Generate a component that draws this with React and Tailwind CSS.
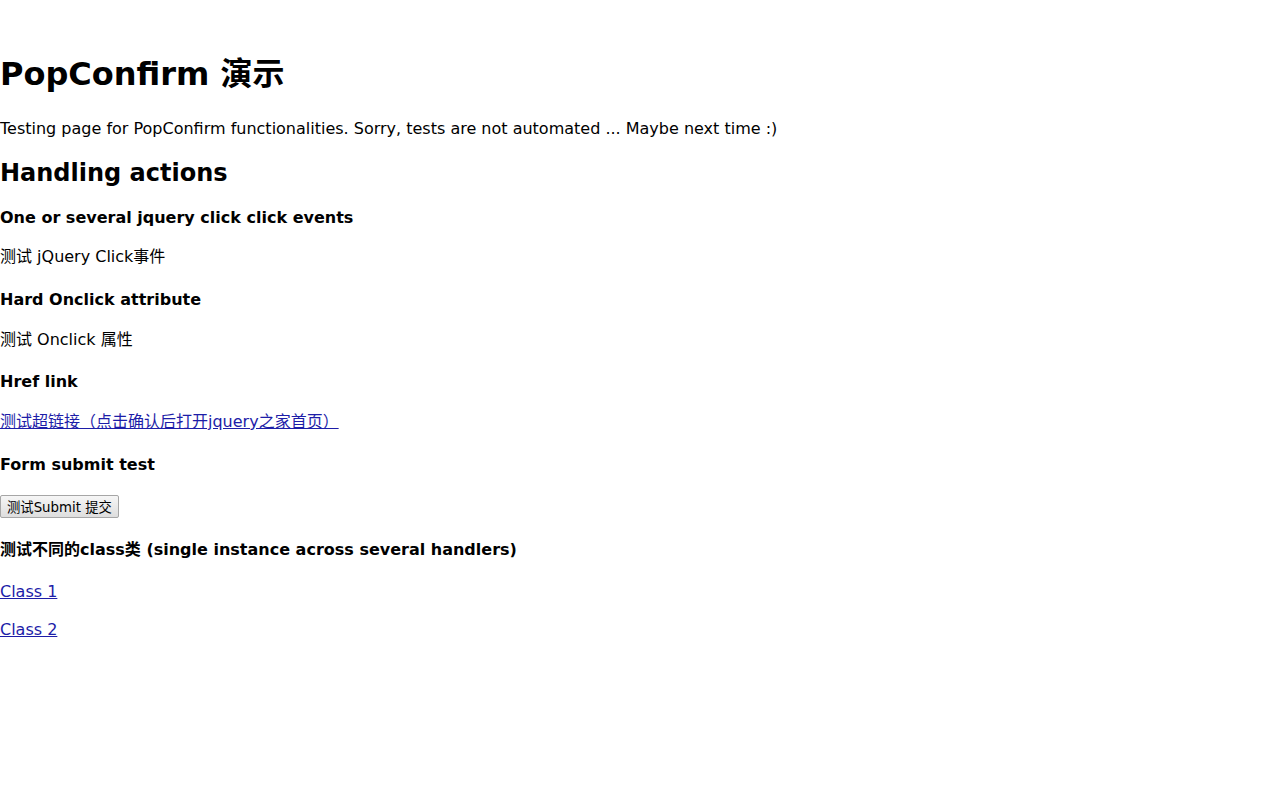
import React from "react";

const font = "font-['DejaVu_Sans','Noto_Sans_CJK_SC',sans-serif]";
const h4 = "text-base font-bold leading-[20px] h-[20px]";
const p = "text-base leading-[20px] h-[20px]";
const link = "text-[#1d1da8] underline";

const Index = () => {
  return (
    <div className={`${font} text-black bg-white min-h-screen pt-[55px] flex flex-col items-start`}>
      <h1 className="text-[32px] font-bold leading-[38px] h-[38px]">PopConfirm 演示</h1>
      <p className={`${p} mt-[25.5px]`}>
        Testing page for PopConfirm functionalities. Sorry, tests are not automated ... Maybe next time :)
      </p>

      <h2 className="text-2xl font-bold leading-[28px] h-[28px] mt-[20.5px]">Handling actions</h2>

      <h4 className={`${h4} mt-[20.8px]`}>One or several jquery click click events</h4>
      <p className={`${p} mt-[19.4px]`}>测试 jQuery Click事件</p>

      <h4 className={`${h4} mt-[22.8px]`}>Hard Onclick attribute</h4>
      <p className={`${p} mt-[20.4px]`}>测试 Onclick 属性</p>

      <h4 className={`${h4} mt-[22.1px]`}>Href link</h4>
      <p className={`${p} mt-[19.5px]`}>
        <a href="#" className={link}>测试超链接（点击确认后打开jquery之家首页）</a>
      </p>

      <h4 className={`${h4} mt-[22.6px]`}>Form submit test</h4>
      <form className="mt-[20.5px] flex" onSubmit={(e) => e.preventDefault()}>
        <button
          type="submit"
          className="h-[23px] text-[13.33px] leading-[normal] px-[6px] border border-[#a6a6a6] rounded-[2px] bg-gradient-to-b from-[#f6f6f6] to-[#dedede] text-black"
        >
          测试Submit 提交
        </button>
      </form>

      <h4 className={`${h4} mt-[21.5px]`}>测试不同的class类 (single instance across several handlers)</h4>
      <p className={`${p} mt-[22.1px]`}>
        <a href="#" className={link}>Class 1</a>
      </p>
      <p className={`${p} mt-[18.2px]`}>
        <a href="#" className={link}>Class 2</a>
      </p>
    </div>
  );
};

export default Index;
